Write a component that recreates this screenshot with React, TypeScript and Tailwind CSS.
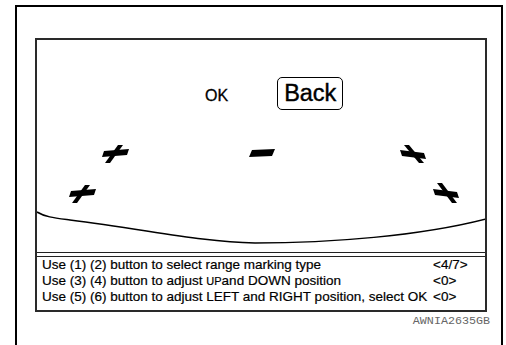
export default function App() {
  const rows = [
    { text: <>Use (1) (2) button to select range marking type</>, value: "<4/7>" },
    {
      text: (
        <>
          Use (3) (4) button to adjust <span className="text-[11px]">UP</span>and DOWN position
        </>
      ),
      value: "<0>",
    },
    { text: <>Use (5) (6) button to adjust LEFT and RIGHT position, select OK</>, value: "<0>" },
  ];

  return (
    <div className="w-[506px] h-[345px] overflow-hidden bg-white font-['Liberation_Sans',Arial,sans-serif] text-black">
      <div className="ml-[15px] mt-[5px] w-[488px] h-[400px] border-2 border-black pt-[31px] pl-[18px]">
        <div className="w-[452px] border-2 border-[#2a2a2a]">
          {/* camera view */}
          <div className="flex flex-col h-[213px] border-b border-[#222]">
            <div className="flex items-baseline h-[75px] pt-[37px] pl-[168px]">
              <span className="text-[16px] leading-none [-webkit-text-stroke:0.3px_#000]">OK</span>
              <div className="ml-[49px] h-[33px] px-[6px] flex items-center border-[1.5px] border-black rounded-[5px] text-[23.5px] leading-none [-webkit-text-stroke:0.4px_#000]">
                Back
              </div>
            </div>
            <svg className="block" width="448" height="137" viewBox="37 115 448 137">
              <g fill="#000">
                {/* top left */}
                <polygon points="104,151 129,149 127,155 102,157" />
                <polygon points="118,145 123,145 110,163 105,163" />
                {/* bottom left */}
                <polygon points="71,191 96,189 94,195 69,197" />
                <polygon points="85,185 90,185 77,203 72,203" />
                {/* top right */}
                <polygon points="400,150 424,153 426,159 402,156" />
                <polygon points="404,145 409,145 424,163 419,163" />
                {/* bottom right */}
                <polygon points="433,189 457,192 459,198 435,195" />
                <polygon points="437,183 442,183 457,203 452,203" />
              </g>
              <polygon points="252,150 275,149 272,156 249,157" fill="#000" />
              <path
                d="M37,212 C45,217 55,218 70,220 C150,230 200,242 255,243 C330,243 420,236 486,219"
                stroke="#000"
                strokeWidth="1.5"
                fill="none"
              />
            </svg>
          </div>
          {/* instructions */}
          <div className="mt-[3px] border-t border-[#222] pl-[5px] pb-[5px] text-[13.5px] leading-[16px] [-webkit-text-stroke:0.2px_#000]">
            {rows.map((r, i) => (
              <div key={i} className="flex whitespace-nowrap">
                <span className="w-[391px]">{r.text}</span>
                <span>{r.value}</span>
              </div>
            ))}
          </div>
        </div>
        <div className="mt-[2px] pr-[11px] text-right font-['Liberation_Mono',monospace] text-[11.7px] leading-[14px] text-[#666]">
          AWNIA2635GB
        </div>
      </div>
    </div>
  );
}
